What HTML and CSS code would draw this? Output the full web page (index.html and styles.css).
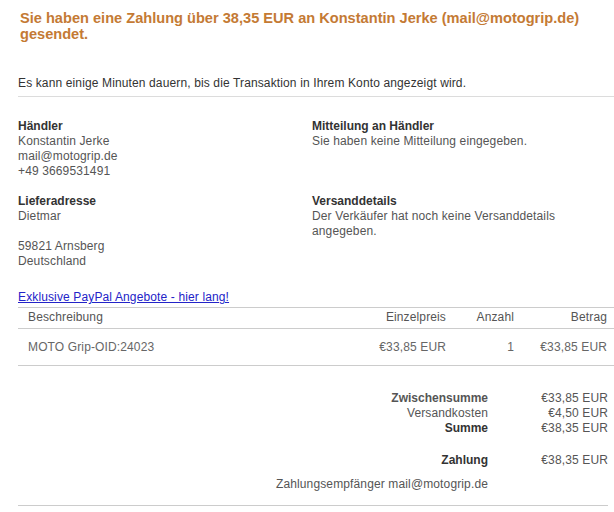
FILE: index.html
```html
<!DOCTYPE html>
<html lang="de">
<head>
<meta charset="utf-8">
<title>Zahlung gesendet</title>
<link rel="stylesheet" href="styles.css">
</head>
<body>
<div class="page">
  <h1 class="title">Sie haben eine Zahlung über 38,35 EUR an Konstantin Jerke (mail@motogrip.de) gesendet.</h1>
  <p class="notice">Es kann einige Minuten dauern, bis die Transaktion in Ihrem Konto angezeigt wird.</p>

  <div class="details">
    <div class="block">
      <div class="label">Händler</div>
      <div>Konstantin Jerke</div>
      <div>mail@motogrip.de</div>
      <div>+49 3669531491</div>
    </div>
    <div class="block">
      <div class="label">Mitteilung an Händler</div>
      <div>Sie haben keine Mitteilung eingegeben.</div>
    </div>
    <div class="block">
      <div class="label">Lieferadresse</div>
      <div>Dietmar</div>
      <div class="blank">&nbsp;</div>
      <div>59821 Arnsberg</div>
      <div>Deutschland</div>
    </div>
    <div class="block narrow">
      <div class="label">Versanddetails</div>
      <div>Der Verkäufer hat noch keine Versanddetails angegeben.</div>
    </div>
  </div>

  <a class="promo" href="#">Exklusive PayPal Angebote - hier lang!</a>

  <table class="items">
    <colgroup>
      <col>
      <col class="c-price">
      <col class="c-qty">
      <col class="c-amount">
    </colgroup>
    <thead>
      <tr>
        <th class="left">Beschreibung</th>
        <th>Einzelpreis</th>
        <th>Anzahl</th>
        <th>Betrag</th>
      </tr>
    </thead>
    <tbody>
      <tr>
        <td class="left">MOTO Grip-OID:24023</td>
        <td>€33,85 EUR</td>
        <td>1</td>
        <td>€33,85 EUR</td>
      </tr>
    </tbody>
  </table>

  <div class="totals">
    <div class="t-label semi">Zwischensumme</div>
    <div class="t-value">€33,85 EUR</div>
    <div class="t-label">Versandkosten</div>
    <div class="t-value">€4,50 EUR</div>
    <div class="t-label strong">Summe</div>
    <div class="t-value">€38,35 EUR</div>
    <div class="t-label strong gap">Zahlung</div>
    <div class="t-value gap">€38,35 EUR</div>
    <div class="t-label payee">Zahlungsempfänger mail@motogrip.de</div>
  </div>
</div>
</body>
</html>
```

FILE: styles.css
```css
html, body {
  margin: 0;
  padding: 0;
  background: #fff;
}

body {
  font-family: "Liberation Sans", Arial, sans-serif;
  font-size: 12px;
  line-height: 15px;
  letter-spacing: 0.13px;
  color: #555;
}

.page {
  padding-left: 18px;
}

.title {
  margin: 0;
  padding: 10px 0 0 2px;
  font-size: 14.6px;
  line-height: 16px;
  letter-spacing: 0;
  font-weight: bold;
  color: #c47a34;
}

.notice {
  margin: 34px 0 0;
  padding-bottom: 5px;
  border-bottom: 1px solid #dcdcdc;
  color: #333;
}

.details {
  display: grid;
  grid-template-columns: 294px 280px;
  row-gap: 15px;
  margin-top: 22px;
}

.label {
  font-weight: bold;
  letter-spacing: 0;
  color: #333;
}

.promo {
  display: inline-block;
  margin-top: 21px;
  color: #2323c8;
  text-decoration: underline;
}

.items {
  width: 100%;
  margin-top: 2px;
  border-collapse: collapse;
  table-layout: fixed;
  color: #666;
}

.c-price { width: 83px; }
.c-qty { width: 68px; }
.c-amount { width: 93px; }

.items th,
.items td {
  font-weight: normal;
  text-align: right;
  padding: 0 7px 0 0;
  white-space: nowrap;
}

.items th {
  padding-top: 2px;
  padding-bottom: 3px;
  color: #555;
}

.items td {
  padding-top: 11px;
  padding-bottom: 10px;
}

.items .left {
  text-align: left;
  padding-left: 10px;
}

.items thead tr {
  border-top: 1px solid #ccc;
  border-bottom: 1px solid #ccc;
}

.items tbody tr {
  border-bottom: 1px solid #ccc;
}

.totals {
  display: grid;
  grid-template-columns: 1fr 120px;
  margin: 25px 6px 0 0;
  padding-bottom: 13px;
  border-bottom: 1px solid #ccc;
}

.t-label,
.t-value {
  text-align: right;
}

.t-label.semi {
  font-weight: bold;
  letter-spacing: 0;
  color: #555;
}

.t-label.strong {
  font-weight: bold;
  letter-spacing: 0;
  color: #333;
}

.gap {
  margin-top: 17px;
}

.payee {
  margin-top: 9px;
}
```
